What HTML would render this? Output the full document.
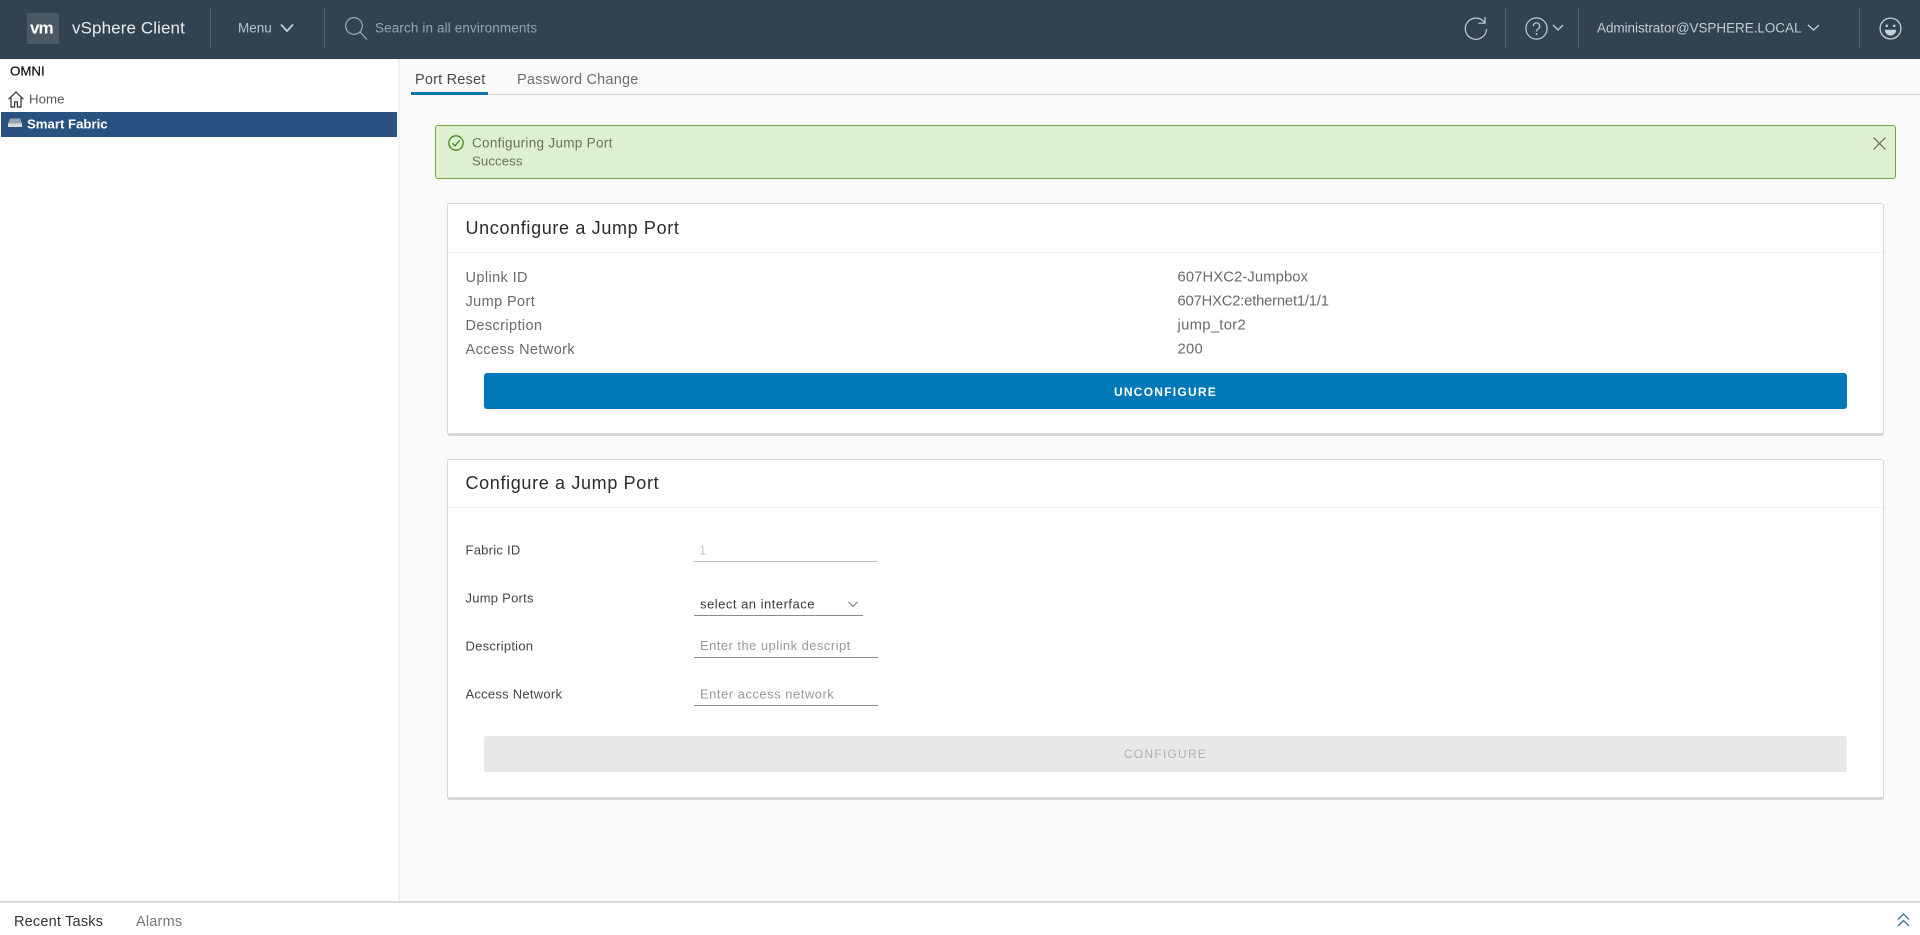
<!DOCTYPE html>
<html lang="en">
<head>
<meta charset="utf-8">
<title>vSphere Client</title>
<style>
html,body{margin:0;padding:0;width:1920px;height:935px;overflow:hidden;background:#fff;font-family:"Liberation Sans",sans-serif;}
.a{position:absolute;white-space:nowrap;}
.t{position:absolute;white-space:nowrap;transform:translateY(-50%);line-height:1;}
svg{position:absolute;overflow:visible;}
</style>
</head>
<body>
<div class="a" style="left:0;top:0;width:1920px;height:59px;background:#314351;"></div>
<div class="a" style="left:27px;top:13px;width:32px;height:31px;background:#4a5964;"></div>
<div class="t" style="left:30px;top:28px;color:#fff;font-size:17px;font-weight:bold;letter-spacing:-1px;">vm</div>
<div class="t" style="left:72px;top:28px;color:#e8ecef;font-size:17px;letter-spacing:.1px;">vSphere Client</div>
<div class="a" style="left:210px;top:8px;width:1px;height:40px;background:#4f606b;"></div>
<div class="t" style="left:238px;top:27.500px;color:#b9c3ca;font-size:13.500px;">Menu</div>
<svg style="left:280px;top:23px" width="14" height="10" viewBox="0 0 14 10"><path d="M1 1.500 7 8l6-6.500" fill="none" stroke="#c3ccd2" stroke-width="1.800"/></svg>
<div class="a" style="left:324px;top:8px;width:1px;height:40px;background:#4f606b;"></div>
<svg style="left:345px;top:17px" width="23" height="23" viewBox="0 0 23 23"><circle cx="9" cy="9" r="8.300" fill="none" stroke="#aab5bc" stroke-width="1.100"/><path d="M15 15l7 7.500" stroke="#aab5bc" stroke-width="1.100"/></svg>
<div class="t" style="left:375px;top:27.500px;color:#97a4ad;font-size:13.500px;letter-spacing:.12px;">Search in all environments</div>

<svg style="left:1464px;top:16px" width="24" height="24" viewBox="0 0 24 24"><path d="M20.500 6.500A10.600 10.600 0 1 0 22.500 13" fill="none" stroke="#c5ced4" stroke-width="1.200"/><path d="M21 1v6.200h-6.500" fill="none" stroke="#c5ced4" stroke-width="1.200"/></svg>
<div class="a" style="left:1505px;top:8px;width:1px;height:40px;background:#4f606b;"></div>
<svg style="left:1525px;top:17px" width="23" height="23" viewBox="0 0 23 23"><circle cx="11.500" cy="11.500" r="10.600" fill="none" stroke="#c5ced4" stroke-width="1.200"/><path d="M8.300 9a3.200 3.200 0 1 1 5 2.700c-1.200.8-1.800 1.400-1.800 2.800" fill="none" stroke="#c5ced4" stroke-width="1.200"/><circle cx="11.500" cy="17" r=".9" fill="#c5ced4"/></svg>
<svg style="left:1552px;top:24px" width="12" height="8" viewBox="0 0 12 8"><path d="M1 1l5 5 5-5" fill="none" stroke="#c5ced4" stroke-width="1.300"/></svg>
<div class="a" style="left:1578px;top:8px;width:1px;height:40px;background:#4f606b;"></div>
<div class="t" style="left:1597px;top:27.500px;color:#c3ccd2;font-size:13.500px;letter-spacing:-.05px;">Administrator@VSPHERE.LOCAL</div>
<svg style="left:1807px;top:24px" width="13" height="8" viewBox="0 0 13 8"><path d="M1 1l5.500 5L12 1" fill="none" stroke="#c5ced4" stroke-width="1.300"/></svg>
<div class="a" style="left:1859px;top:8px;width:1px;height:40px;background:#4f606b;"></div>
<svg style="left:1879px;top:17px" width="23" height="23" viewBox="0 0 23 23"><circle cx="11.500" cy="11.500" r="10.400" fill="none" stroke="#c5ced4" stroke-width="1.300"/><circle cx="7.800" cy="8.800" r="1.300" fill="#c5ced4"/><circle cx="15.200" cy="8.800" r="1.300" fill="#c5ced4"/><path d="M5.800 12.800h11.400a5.700 5.700 0 0 1-11.400 0z" fill="#c5ced4"/></svg>

<div class="a" style="left:0;top:59px;width:398px;height:842px;background:#fff;"></div>
<div class="a" style="left:398px;top:59px;width:1522px;height:842px;background:#fafafa;"></div>
<div class="a" style="left:398px;top:59px;width:2px;height:842px;background:#f0f0f0;"></div>
<div class="t" style="left:10px;top:71px;color:#111;font-size:13.300px;-webkit-text-stroke:.2px #111;">OMNI</div>
<svg style="left:8px;top:91px" width="16" height="17" viewBox="0 0 16 17"><path d="M.6 8.200 8 1l7.400 7.200M3 6.500V16h3.600v-5h2.800v5H13V6.500" fill="none" stroke="#333" stroke-width="1.200"/></svg>
<div class="t" style="left:29px;top:99px;color:#565656;font-size:13.300px;">Home</div>
<div class="a" style="left:1px;top:112px;width:396px;height:25px;background:#2a5280;"></div>
<svg style="left:8px;top:118px" width="14" height="10" viewBox="0 0 14 10"><path d="M2 .5h10L14 5.500H0z" fill="#9aa3ad"/><rect x="0" y="5.500" width="14" height="3.500" fill="#d6d9dc"/></svg>
<div class="t" style="left:27px;top:124px;color:#fff;font-size:13.200px;font-weight:bold;">Smart Fabric</div>

<div class="t" style="left:415px;top:80px;color:#4a4a4a;font-size:14.500px;letter-spacing:.2px;">Port Reset</div>
<div class="t" style="left:517px;top:80px;color:#6e6e6e;font-size:14.500px;letter-spacing:.2px;">Password Change</div>
<div class="a" style="left:411px;top:94px;width:1509px;height:1px;background:#cfcfcf;"></div>
<div class="a" style="left:411px;top:92px;width:77px;height:3px;background:#0f78a8;"></div>

<div class="a" style="left:435px;top:125px;width:1459px;height:52px;background:#dff0d0;border:1px solid #6fa843;border-radius:3px;"></div>
<svg style="left:448px;top:134.500px" width="16" height="16" viewBox="0 0 16 16"><circle cx="8" cy="8" r="7.200" fill="none" stroke="#3f8a1c" stroke-width="1.300"/><path d="M4.500 8.200 7 10.800l4.700-5.500" fill="none" stroke="#3f8a1c" stroke-width="1.300"/></svg>
<div class="t" style="left:472px;top:143px;color:#667261;font-size:13.500px;letter-spacing:.3px;">Configuring Jump Port</div>
<div class="t" style="left:472px;top:161px;color:#667261;font-size:13.200px;letter-spacing:.1px;">Success</div>
<svg style="left:1873px;top:137px" width="13" height="13" viewBox="0 0 13 13"><path d="M.5.500l12 12M12.500.500l-12 12" stroke="#5a6358" stroke-width="1.100"/></svg>

<div class="a" style="left:447px;top:203px;width:1435px;height:229px;background:#fff;border:1px solid #d7d7d7;border-bottom:3px solid #d7d7d7;border-radius:3px;"></div>
<div class="a" style="left:448px;top:252px;width:1435px;height:1px;background:#eeeeee;"></div>
<div class="t" style="left:465.500px;top:228px;color:#2b2b2b;font-size:18px;letter-spacing:.65px;">Unconfigure a Jump Port</div>
<div class="t" style="left:465.500px;top:278px;color:#6a6a6a;font-size:14.500px;letter-spacing:.4px;">Uplink ID</div>
<div class="t" style="left:465.500px;top:302px;color:#6a6a6a;font-size:14.500px;letter-spacing:.4px;">Jump Port</div>
<div class="t" style="left:465.500px;top:326px;color:#6a6a6a;font-size:14.500px;letter-spacing:.4px;">Description</div>
<div class="t" style="left:465.500px;top:350px;color:#6a6a6a;font-size:14.500px;letter-spacing:.4px;">Access Network</div>
<div class="t" style="left:1177.500px;top:278px;color:#6a6a6a;font-size:14.800px;letter-spacing:.1px;">607HXC2-Jumpbox</div>
<div class="t" style="left:1177.500px;top:302px;color:#6a6a6a;font-size:14.800px;letter-spacing:-.2px;">607HXC2:ethernet1/1/1</div>
<div class="t" style="left:1177.500px;top:326px;color:#6a6a6a;font-size:14.800px;letter-spacing:.3px;">jump_tor2</div>
<div class="t" style="left:1177.500px;top:350px;color:#6a6a6a;font-size:14.800px;letter-spacing:.3px;">200</div>
<div class="a" style="left:484px;top:373px;width:1363px;height:36px;background:#0079b8;border-radius:3px;"></div>
<div class="t" style="left:484px;top:392px;width:1363px;text-align:center;color:#fff;font-size:12px;font-weight:bold;letter-spacing:1.250px;">UNCONFIGURE</div>

<div class="a" style="left:447px;top:459px;width:1435px;height:337px;background:#fff;border:1px solid #d7d7d7;border-bottom:3px solid #d7d7d7;border-radius:3px;"></div>
<div class="a" style="left:448px;top:507px;width:1435px;height:1px;background:#eeeeee;"></div>
<div class="t" style="left:465.500px;top:483px;color:#2b2b2b;font-size:18px;letter-spacing:.65px;">Configure a Jump Port</div>
<div class="t" style="left:465.500px;top:549.500px;color:#444;font-size:13px;letter-spacing:.25px;">Fabric ID</div>
<div class="t" style="left:465.500px;top:597.500px;color:#444;font-size:13px;letter-spacing:.25px;">Jump Ports</div>
<div class="t" style="left:465.500px;top:645.500px;color:#444;font-size:13px;letter-spacing:.25px;">Description</div>
<div class="t" style="left:465.500px;top:693.500px;color:#444;font-size:13px;letter-spacing:.25px;">Access Network</div>
<div class="t" style="left:699px;top:549.500px;color:#c4c4c4;font-size:13px;">1</div>
<div class="a" style="left:694px;top:561px;width:184px;height:1px;background:#c0c0c0;"></div>
<div class="t" style="left:700px;top:603.500px;color:#3a3a3a;font-size:13px;letter-spacing:.5px;">select an interface</div>
<svg style="left:848px;top:601px" width="10" height="7" viewBox="0 0 10 7"><path d="M.5 1l4.500 4.500L9.500 1" fill="none" stroke="#777" stroke-width="1"/></svg>
<div class="a" style="left:694px;top:615px;width:169px;height:1px;background:#8a8a8a;"></div>
<div class="t" style="left:700px;top:645.500px;width:151px;overflow:hidden;color:#999;font-size:13px;letter-spacing:.45px;line-height:16px;">Enter the uplink description</div>
<div class="a" style="left:694px;top:657px;width:184px;height:1px;background:#8a8a8a;"></div>
<div class="t" style="left:700px;top:693.500px;color:#999;font-size:13px;letter-spacing:.5px;">Enter access network</div>
<div class="a" style="left:694px;top:705px;width:184px;height:1px;background:#8a8a8a;"></div>
<div class="a" style="left:484px;top:736px;width:1363px;height:36px;background:#e8e8e8;border-radius:3px;"></div>
<div class="t" style="left:484px;top:754px;width:1363px;text-align:center;color:#b0b0b0;font-size:12px;letter-spacing:1.250px;">CONFIGURE</div>

<div class="a" style="left:0;top:901px;width:1920px;height:34px;background:#fff;border-top:2px solid #dcdcdc;box-sizing:border-box;"></div>
<div class="t" style="left:14px;top:922px;color:#333;font-size:14.500px;letter-spacing:.2px;">Recent Tasks</div>
<div class="t" style="left:136px;top:922px;color:#777;font-size:14.500px;letter-spacing:.2px;">Alarms</div>
<svg style="left:1897px;top:913px" width="13" height="14" viewBox="0 0 13 14"><path d="M1 6.500 6.500 1 12 6.500M1 13l5.500-5.500L12 13" fill="none" stroke="#2f7396" stroke-width="1.300"/></svg>
</body>
</html>
